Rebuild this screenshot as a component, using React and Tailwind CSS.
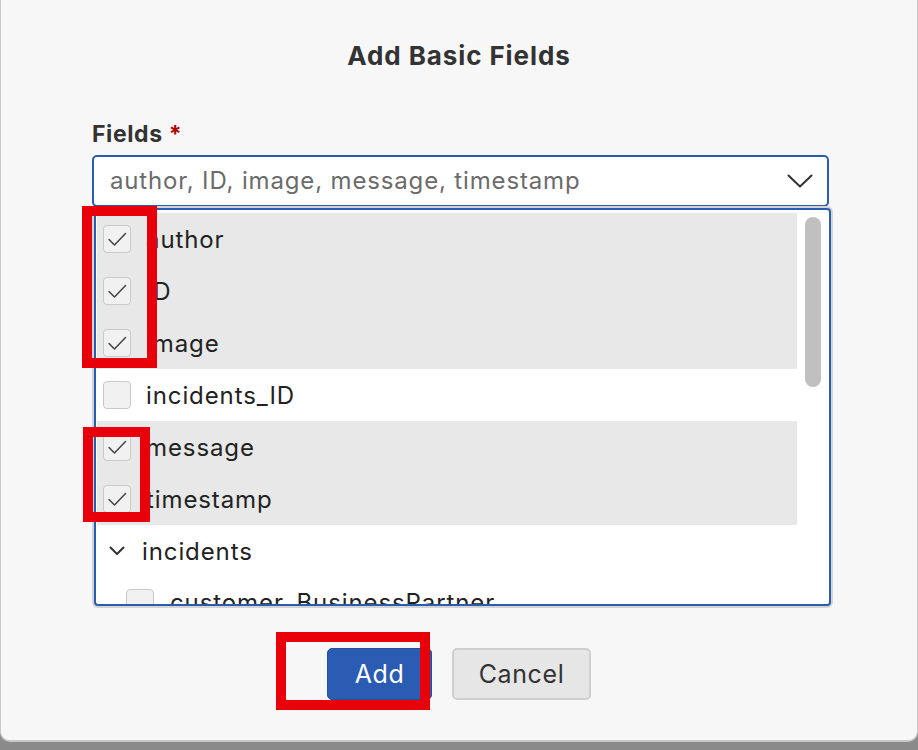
import React from "react";

const fields = [
  { name: "author", checked: true },
  { name: "ID", checked: true },
  { name: "image", checked: true },
  { name: "incidents_ID", checked: false },
  { name: "message", checked: true },
  { name: "timestamp", checked: true },
];

function Checkbox({ checked }) {
  return (
    <div className="w-[28px] h-[28px] shrink-0 rounded-[4px] border border-[#c9c9c9] bg-[#f1f1f1] flex items-center justify-center">
      {checked && (
        <svg width="22" height="22" viewBox="0 0 22 22" fill="none">
          <path d="M3 11.5 L8.5 17 L19.5 5.5" stroke="#444" strokeWidth="1.5" strokeLinecap="round" strokeLinejoin="round" />
        </svg>
      )}
    </div>
  );
}

export default function App() {
  return (
    <div className="w-[918px] h-[750px] bg-[#8a8a8a] relative font-['Inter',sans-serif] overflow-hidden">
      {/* Dialog */}
      <div className="h-[742px] bg-[#f7f7f7] rounded-b-[10px] border-x border-b-2 border-[#c8c8c8] flex flex-col">
        <h2 className="pt-[39px] text-center text-[26px] leading-[34px] font-bold tracking-[0.9px] text-[#333]">Add Basic Fields</h2>

        <div className="pl-[91px] mt-[48px]">
          <div className="text-[23px] leading-[26px] font-bold tracking-[0.6px] text-[#333]">
            Fields <span className="text-[#b00000]">*</span>
          </div>

          {/* Select input */}
          <div className="mt-[8px] w-[737px] h-[52px] bg-white border-2 border-[#2a5db0] rounded-[5px] flex items-center justify-between pl-[16px] pr-[14px]">
            <span className="text-[24px] text-[#6b6b6b] tracking-[0.85px]">author, ID, image, message, timestamp</span>
            <svg width="26" height="14" viewBox="0 0 26 14" fill="none">
              <path d="M1.5 1.5 L13 12.5 L24.5 1.5" stroke="#333" strokeWidth="2" strokeLinecap="round" strokeLinejoin="round" />
            </svg>
          </div>

          {/* Options list */}
          <div className="mt-[1px] ml-[2px] w-[737px] h-[398px] bg-white border-2 border-[#2a5db0] rounded-[4px] shadow-[0_0_0_2px_#d4d4d4] flex overflow-hidden">
            <div className="flex-1 pt-[3px] pl-[1px]">
              {fields.map((f) => (
                <div
                  key={f.name}
                  className={`h-[52px] flex items-center gap-[15px] pl-[6px] ${f.checked ? "bg-[#e8e8e8]" : "bg-white"}`}
                >
                  <Checkbox checked={f.checked} />
                  <span className="text-[24px] tracking-[0.9px] text-[#222] pt-[2px]">{f.name}</span>
                </div>
              ))}
              <div className="h-[52px] flex items-center gap-[17px] pl-[12px]">
                <svg width="16" height="10" viewBox="0 0 16 10" fill="none">
                  <path d="M1.5 1.5 L8 8 L14.5 1.5" stroke="#333" strokeWidth="2" strokeLinecap="round" strokeLinejoin="round" />
                </svg>
                <span className="text-[24px] tracking-[0.9px] text-[#222] pt-[2px]">incidents</span>
              </div>
              <div className="h-[52px] flex items-center gap-[16px] pl-[29px]">
                <Checkbox checked={false} />
                <span className="text-[24px] tracking-[0.9px] text-[#222]">customer_BusinessPartner</span>
              </div>
            </div>
            <div className="w-[32px] pt-[7px] flex justify-center">
              <div className="w-[16px] h-[170px] rounded-full bg-[#c0c0c0]" />
            </div>
          </div>
        </div>

        {/* Buttons */}
        <div className="mt-[42px] flex justify-center gap-[20px]">
          <button className="w-[105px] h-[52px] rounded-[5px] bg-[#2a5cb4] border border-[#244f9c] text-white text-[25px] tracking-[0.6px] pt-[2px]">Add</button>
          <button className="w-[139px] h-[52px] rounded-[5px] bg-[#e6e6e6] border-2 border-[#cfcfcf] text-[#333] text-[25px] tracking-[0.6px] pt-[2px]">Cancel</button>
        </div>
      </div>

      {/* Annotation boxes */}
      <div className="absolute left-[82px] top-[206px] w-[75px] h-[162px] border-[10px] border-[#e8000a]" />
      <div className="absolute left-[83px] top-[427px] w-[67px] h-[95px] border-[10px] border-[#e8000a]" />
      <div className="absolute left-[276px] top-[632px] w-[154px] h-[78px] border-[10px] border-[#e8000a]" />
    </div>
  );
}
